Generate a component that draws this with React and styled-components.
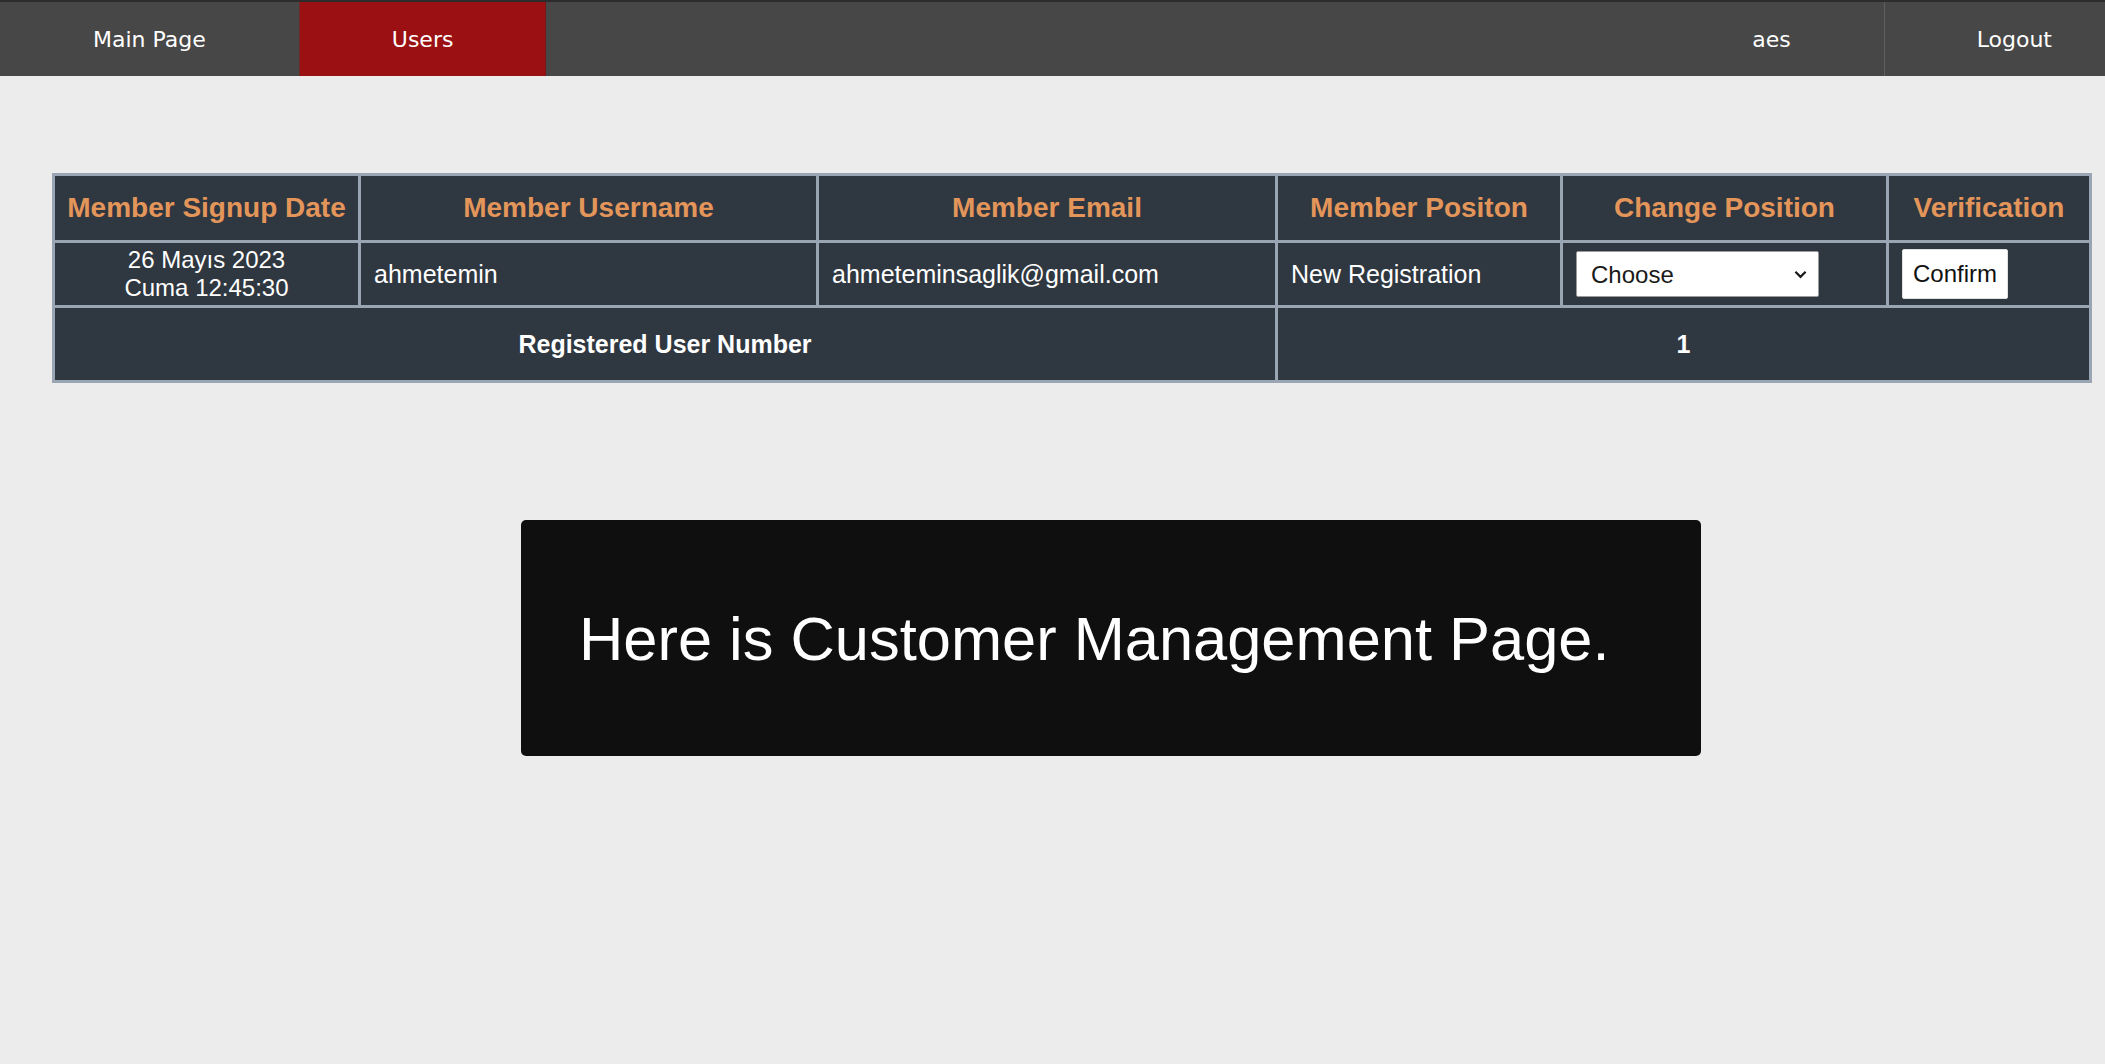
import React from 'react';
import styled, { createGlobalStyle } from 'styled-components';

const GlobalStyle = createGlobalStyle`
  html, body {
    margin: 0;
    padding: 0;
    background-color: #ececec;
    font-family: 'Liberation Sans', Arial, sans-serif;
  }
`;

const members = [
  {
    date: '26 Mayıs 2023',
    time: 'Cuma 12:45:30',
    username: 'ahmetemin',
    email: 'ahmeteminsaglik@gmail.com',
    position: 'New Registration',
  },
];

function App() {
  return (
    <Page>
      <GlobalStyle />
      <Navbar>
        <NavLink href='#'>Main Page</NavLink>
        <NavLink href='#' $active>
          Users
        </NavLink>
        <RightGroup>
          <NavLink href='#'>aes</NavLink>
          <NavLink href='#' $divider $last>
            Logout
          </NavLink>
        </RightGroup>
      </Navbar>

      <Content>
        <MemberTable>
          <colgroup>
            <col style={{ width: 306 }} />
            <col style={{ width: 458 }} />
            <col style={{ width: 459 }} />
            <col style={{ width: 285 }} />
            <col style={{ width: 326 }} />
            <col style={{ width: 203 }} />
          </colgroup>
          <thead>
            <tr>
              <HeadCell>Member Signup Date</HeadCell>
              <HeadCell>Member Username</HeadCell>
              <HeadCell>Member Email</HeadCell>
              <HeadCell>Member Positon</HeadCell>
              <HeadCell>Change Position</HeadCell>
              <HeadCell>Verification</HeadCell>
            </tr>
          </thead>
          <tbody>
            {members.map((m) => (
              <tr key={m.email}>
                <DateCell>
                  {m.date}
                  <br />
                  {m.time}
                </DateCell>
                <Cell>{m.username}</Cell>
                <Cell>{m.email}</Cell>
                <Cell>{m.position}</Cell>
                <Cell>
                  <SelectWrap>
                    <PositionSelect defaultValue=''>
                      <option value=''>Choose</option>
                      <option value='user'>User</option>
                      <option value='admin'>Admin</option>
                    </PositionSelect>
                    <Chevron viewBox='0 0 14 9' aria-hidden='true'>
                      <path d='M1.5 1.5 L7 7 L12.5 1.5' />
                    </Chevron>
                  </SelectWrap>
                </Cell>
                <Cell>
                  <ConfirmButton>Confirm</ConfirmButton>
                </Cell>
              </tr>
            ))}
            <tr>
              <TotalCell colSpan={3}>Registered User Number</TotalCell>
              <TotalCell colSpan={3}>{members.length}</TotalCell>
            </tr>
          </tbody>
        </MemberTable>

        <InfoBox>Here is Customer Management Page.</InfoBox>
      </Content>
    </Page>
  );
}

const Page = styled.div`
  min-height: 1064px;
  background-color: #ececec;
`;

const Navbar = styled.nav`
  display: flex;
  height: 76px;
  background-color: #474747;
  border-top: 2px solid #2c2c2c;
  box-sizing: border-box;
  overflow: hidden;
`;

const RightGroup = styled.div`
  display: flex;
  margin-left: auto;
`;

const NavLink = styled.a`
  display: flex;
  align-items: center;
  padding: 0 ${(p) => (p.$last ? '52px' : '92px')} 0 92px;
  color: #ffffff;
  text-decoration: none;
  font-family: 'DejaVu Sans', Verdana, sans-serif;
  font-size: 22px;
  background-color: ${(p) => (p.$active ? '#9b1113' : 'transparent')};
  border-left: 1px solid ${(p) => (p.$divider ? '#5e5e5e' : p.$active ? '#6a2a2a' : 'transparent')};
  border-right: 1px solid ${(p) => (p.$active ? '#7a1515' : 'transparent')};
`;

const Content = styled.main`
  display: flex;
  flex-direction: column;
  padding: 97px 16px 0 52px;
`;

const MemberTable = styled.table`
  width: 2037px;
  border-collapse: collapse;
  table-layout: fixed;
  border: 3px solid #9aa5b4;
  background-color: #2f3740;
`;

const HeadCell = styled.th`
  height: 64px;
  border: 3px solid #9aa5b4;
  color: #e3955a;
  font-size: 28px;
  font-weight: bold;
  text-align: center;
  padding: 0 4px;
  white-space: nowrap;
`;

const Cell = styled.td`
  height: 62px;
  border: 3px solid #9aa5b4;
  color: #ffffff;
  font-size: 25px;
  padding: 0 13px;
  text-align: left;
  white-space: nowrap;
`;

const DateCell = styled(Cell)`
  font-size: 24px;
  line-height: 28px;
  text-align: center;
`;

const TotalCell = styled.td`
  height: 70px;
  border: 3px solid #9aa5b4;
  color: #ffffff;
  font-size: 25px;
  font-weight: bold;
  text-align: center;
`;

const SelectWrap = styled.div`
  position: relative;
  display: inline-block;
  vertical-align: middle;
`;

const PositionSelect = styled.select`
  appearance: none;
  display: block;
  width: 243px;
  height: 46px;
  font-family: 'Liberation Sans', Arial, sans-serif;
  font-size: 24px;
  color: #1a1a1a;
  background-color: #ffffff;
  border: 1px solid #9a9a9a;
  border-radius: 2px;
  padding: 0 14px;
  outline: none;
`;

const Chevron = styled.svg`
  position: absolute;
  right: 12px;
  top: 19px;
  width: 13px;
  height: 9px;
  fill: none;
  stroke: #1a1a1a;
  stroke-width: 2.4;
  pointer-events: none;
`;

const ConfirmButton = styled.button`
  display: inline-block;
  vertical-align: middle;
  height: 50px;
  padding: 0 10px;
  font-family: 'Liberation Sans', Arial, sans-serif;
  font-size: 24px;
  color: #111;
  background-color: #ffffff;
  border: 1px solid #e0e0e0;
  border-radius: 2px;
  cursor: pointer;
`;

const InfoBox = styled.div`
  width: 1180px;
  height: 236px;
  box-sizing: border-box;
  margin: 137px 0 0 469px;
  padding-left: 58px;
  display: flex;
  align-items: center;
  background-color: #0f0f0f;
  border-radius: 5px;
  color: #ffffff;
  font-size: 61.4px;
`;

export default App;
